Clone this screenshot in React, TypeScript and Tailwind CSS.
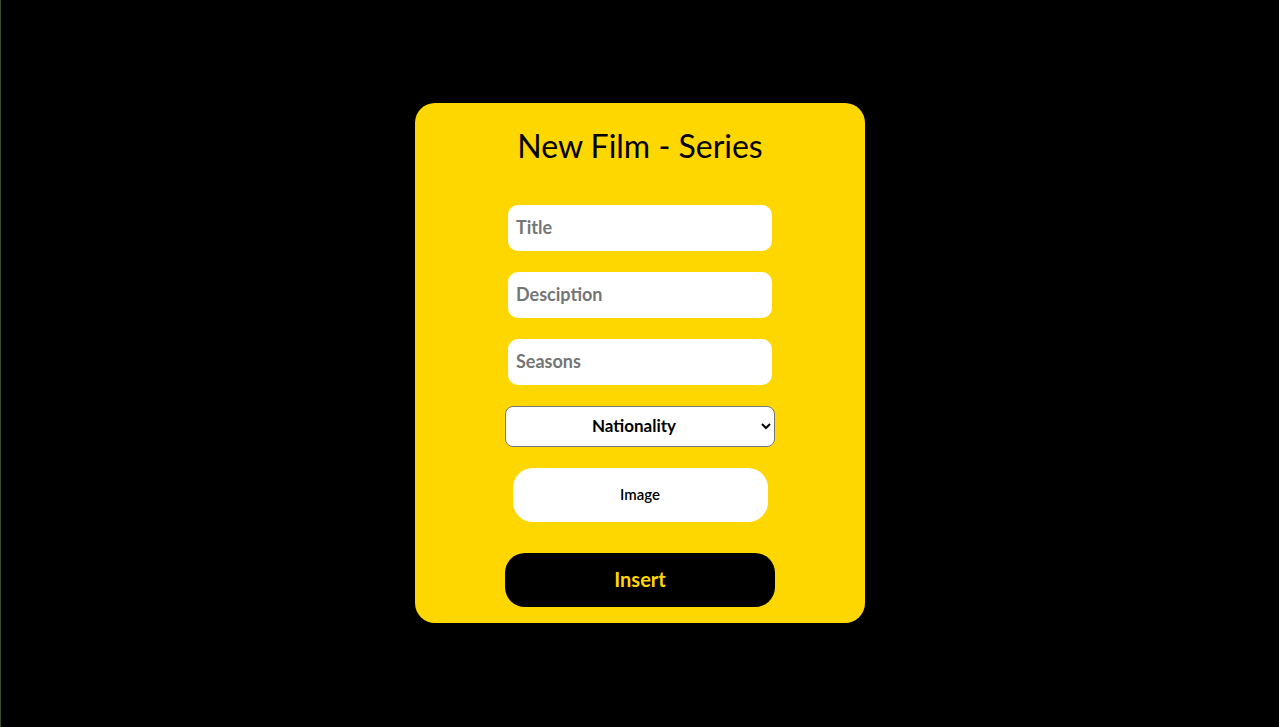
import React from "react";

const font = { fontFamily: "Lato, 'Open Sans', sans-serif" };

const fieldCls =
  "w-[264px] h-[46px] rounded-[10px] bg-white px-2 pb-[2px] text-[18px] font-bold text-black placeholder:text-[#757575] outline-none";

export default function App() {
  return (
    <div
      style={font}
      className="w-[1279px] h-[727px] bg-black border-l border-[#3b4a33] flex items-start justify-center pt-[103px]"
    >
      <form className="w-[450px] h-[520px] rounded-[20px] bg-[#ffd700] flex flex-col items-center pt-[23px]">
        <h1 className="text-[32px] leading-[40px] text-black font-normal">
          New Film - Series
        </h1>

        <input className={`${fieldCls} mt-[39px]`} placeholder="Title" />
        <input className={`${fieldCls} mt-[21px]`} placeholder="Desciption" />
        <input className={`${fieldCls} mt-[21px]`} placeholder="Seasons" />

        <select className="mt-[21px] w-[270px] h-[41px] rounded-[8px] border border-[#767676] bg-white text-[17px] font-bold text-black text-center px-1 pb-[3px]">
          <option>Nationality</option>
        </select>

        <label className="mt-[21px] w-[255px] h-[54px] rounded-[20px] bg-white flex items-center justify-center text-[15px] font-semibold text-black cursor-pointer pb-[2px]">
          Image
          <input type="file" className="hidden" />
        </label>

        <button
          type="button"
          className="mt-[31px] w-[270px] h-[54px] rounded-[20px] bg-black text-[#ffd700] text-[20px] font-bold pb-[2px]"
        >
          Insert
        </button>
      </form>
    </div>
  );
}
